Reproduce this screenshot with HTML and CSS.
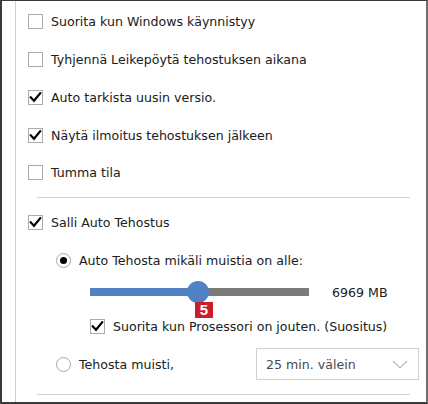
FILE: index.html
```html
<!DOCTYPE html>
<html lang="fi">
<head>
<meta charset="utf-8">
<link rel="stylesheet" href="styles.css">
</head>
<body>
<div class="frame">
  <div class="panel">
    <div class="row top">
      <span class="cb"></span><span class="lbl">Suorita kun Windows käynnistyy</span>
    </div>
    <div class="row top">
      <span class="cb"></span><span class="lbl">Tyhjennä Leikepöytä tehostuksen aikana</span>
    </div>
    <div class="row top">
      <span class="cb"><svg viewBox="0 0 15 15"><path d="M2.8 7.4 L6 10.8 L12.2 3.2"/></svg></span><span class="lbl">Auto tarkista uusin versio.</span>
    </div>
    <div class="row top">
      <span class="cb"><svg viewBox="0 0 15 15"><path d="M2.8 7.4 L6 10.8 L12.2 3.2"/></svg></span><span class="lbl">Näytä ilmoitus tehostuksen jälkeen</span>
    </div>
    <div class="row top">
      <span class="cb"></span><span class="lbl">Tumma tila</span>
    </div>
    <div class="sep first"></div>
    <div class="row salli">
      <span class="cb"><svg viewBox="0 0 15 15"><path d="M2.8 7.4 L6 10.8 L12.2 3.2"/></svg></span><span class="lbl">Salli Auto Tehostus</span>
    </div>
    <div class="row radio-row">
      <span class="rb on"></span><span class="lbl">Auto Tehosta mikäli muistia on alle:</span>
    </div>
    <div class="slider-row">
      <div class="track">
        <div class="fill" style="width:108px"></div>
        <div class="thumb"></div>
        <div class="badge">5</div>
      </div>
      <span class="value">6969 MB</span>
    </div>
    <div class="row cpu">
      <span class="cb"><svg viewBox="0 0 15 15"><path d="M2.8 7.4 L6 10.8 L12.2 3.2"/></svg></span><span class="lbl">Suorita kun Prosessori on jouten. (Suositus)</span>
    </div>
    <div class="row radio2">
      <div class="radio-label"><span class="rb"></span><span class="lbl">Tehosta muisti,</span></div>
      <div class="select">
        <span class="sel-text">25 min. välein</span>
        <svg class="chev" viewBox="0 0 16 9"><path d="M1 1 L8 8 L15 1"/></svg>
      </div>
    </div>
    <div class="sep last"></div>
  </div>
</div>
</body>
</html>
```

FILE: styles.css
```css
html, body {
  margin: 0;
  padding: 0;
  background: #ffffff;
}

.frame {
  width: 428px;
  height: 404px;
  box-sizing: border-box;
  border-top: 1px solid #3a3a3a;
  border-left: 2px solid #3a3a3a;
  border-bottom: 2px solid #3a3a3a;
  border-right: 2px solid #6e6e6e;
  padding-left: 13px;
  display: flex;
  background: #ffffff;
  font-family: "DejaVu Sans", sans-serif;
  font-size: 12.6px;
  color: #202020;
}

.panel {
  flex: 1;
  border-left: 1px solid #cfcfcf;
  padding-top: 2px;
  display: flex;
  flex-direction: column;
}

.row {
  display: flex;
  align-items: center;
}

.row.top {
  height: 37.75px;
  padding-left: 12px;
}

.lbl {
  margin-left: 8px;
  white-space: nowrap;
}

.cb {
  width: 15px;
  height: 15px;
  box-sizing: border-box;
  border: 1px solid #ababab;
  background: #ffffff;
  flex: none;
  display: flex;
}

.cb svg {
  width: 15px;
  height: 15px;
  margin: -1px;
}

.cb path {
  fill: none;
  stroke: #000000;
  stroke-width: 2.2;
  stroke-linecap: square;
  stroke-linejoin: miter;
}

.sep {
  height: 1px;
  background: #d2d2d2;
  margin-left: 21px;
  width: 373px;
}

.sep.first {
  margin-top: 5px;
  margin-bottom: 6.25px;
}

.sep.last {
  margin-top: 14px;
}

.row.salli {
  height: 36px;
  padding-left: 12px;
}

.row.radio-row {
  height: 40px;
  padding-left: 40px;
}

.rb {
  width: 15px;
  height: 15px;
  box-sizing: border-box;
  border: 1px solid #a6a6a6;
  border-radius: 50%;
  flex: none;
  display: flex;
  align-items: center;
  justify-content: center;
  background: #ffffff;
}

.rb.on::after {
  content: "";
  width: 7px;
  height: 7px;
  border-radius: 50%;
  background: #000000;
}

.slider-row {
  height: 24px;
  display: flex;
  align-items: center;
  padding-left: 74px;
}

.track {
  position: relative;
  width: 219px;
  height: 8px;
  background: #7b7b7b;
  flex: none;
}

.fill {
  height: 8px;
  background: #4f81c3;
}

.thumb {
  position: absolute;
  left: 97px;
  top: -7px;
  width: 22px;
  height: 22px;
  border-radius: 50%;
  background: #4f81c3;
}

.badge {
  position: absolute;
  left: 105px;
  top: 14px;
  width: 18px;
  height: 16px;
  background: #cc1d2b;
  color: #ffffff;
  font-family: "Liberation Sans", Arial, sans-serif;
  font-weight: bold;
  font-size: 15px;
  line-height: 16px;
  text-align: center;
}

.value {
  margin-left: 23px;
  white-space: nowrap;
}

.row.cpu {
  height: 28px;
  margin-top: 8px;
  padding-left: 74px;
}

.row.radio2 {
  height: 32px;
  margin-top: 8px;
  padding-left: 40px;
}

.radio-label {
  flex: 0 0 200px;
  display: flex;
  align-items: center;
}

.select {
  width: 163px;
  height: 32px;
  box-sizing: border-box;
  border: 1px solid #d0d0d0;
  display: flex;
  align-items: center;
  padding-left: 9px;
  padding-right: 10px;
}

.sel-text {
  flex: 1;
  color: #4a4a4a;
  white-space: nowrap;
}

.chev {
  width: 16px;
  height: 9px;
}

.chev path {
  fill: none;
  stroke: #b8b8b8;
  stroke-width: 1.2;
}
```
